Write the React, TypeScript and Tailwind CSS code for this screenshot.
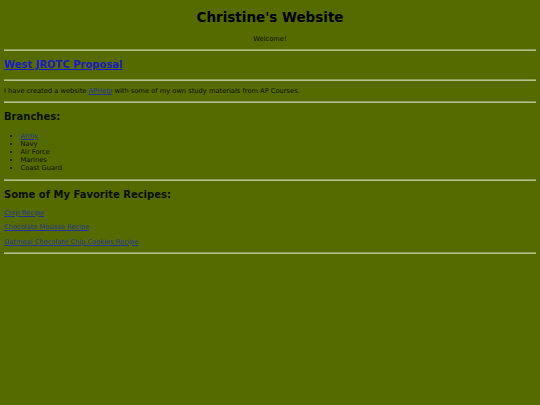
import React from "react";

export default function App() {
  return (
    <div className="min-h-[405px] w-full bg-[#556b00] px-[4px] pb-[4px] text-[#0a0f00] [font-family:'DejaVu_Sans',Verdana,sans-serif]">
      <div className="h-[9px]" />
      <h1 className="text-center text-[13.5px] font-bold leading-[16px] text-black">Christine's Website</h1>
      <p className="mt-[10px] text-center text-[6.7px] leading-[8px]">Welcome!</p>
      <div className="mt-[6px] h-[2px] border-t border-t-[#8f9e58] border-b border-b-[#b3c08a]" />
      <h2 className="mt-[8px] text-[10px] font-bold leading-[12px]">
        <a href="#" className="text-[#1a1ac4] underline">West JROTC Proposal</a>
      </h2>
      <div className="mt-[7.5px] h-[2px] border-t border-t-[#8f9e58] border-b border-b-[#b3c08a]" />
      <p className="mt-[6.5px] text-[6.7px] leading-[8px]">
        I have created a website <a href="#" className="text-[#25339a] underline">APHelp</a> with some of my own study materials from AP Courses.
      </p>
      <div className="mt-[6px] h-[2px] border-t border-t-[#8f9e58] border-b border-b-[#b3c08a]" />
      <h2 className="mt-[8px] text-[10px] font-bold leading-[12px]">Branches:</h2>
      <ul className="mt-[8.5px] list-disc pl-[16.5px] text-[6.7px] leading-[8px]">
        <li><a href="#" className="text-[#25339a] underline">Army</a></li>
        <li>Navy</li>
        <li>Air Force</li>
        <li>Marines</li>
        <li>Coast Guard</li>
      </ul>
      <div className="mt-[7px] h-[2px] border-t border-t-[#8f9e58] border-b border-b-[#b3c08a]" />
      <h2 className="mt-[8px] text-[10px] font-bold leading-[12px]">Some of My Favorite Recipes:</h2>
      <p className="mt-[8px] text-[6.7px] leading-[8px]"><a href="#" className="text-[#25339a] underline">Crep Recipe</a></p>
      <p className="mt-[6.7px] text-[6.7px] leading-[8px]"><a href="#" className="text-[#25339a] underline">Chocolate Mousse Recipe</a></p>
      <p className="mt-[6.7px] text-[6.7px] leading-[8px]"><a href="#" className="text-[#25339a] underline">Oatmeal Chocolate Chip Cookies Recipe</a></p>
      <div className="mt-[6.2px] h-[2px] border-t border-t-[#8f9e58] border-b border-b-[#b3c08a]" />
    </div>
  );
}
